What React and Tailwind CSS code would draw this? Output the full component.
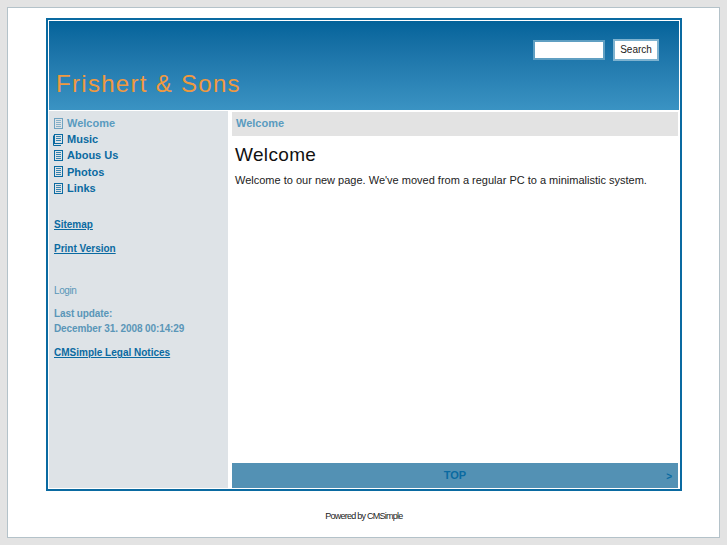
import React from "react";

// small document glyph used in the sidebar menu
function DocIcon({ stacked = false, color = "#0a6aa1" }) {
  return (
    <svg width="9" height="11" viewBox="0 0 9 11" fill="none" stroke={color} strokeWidth="1" className="shrink-0 overflow-visible">
      {stacked && <path d="M-0.5 1.5V11.5H7" />}
      <rect x="0.5" y="0.5" width="8" height={stacked ? 9 : 10} />
      <path d="M2 2.5H7M2 4.5H7M2 6.5H7" opacity="0.8" />
      {!stacked && <path d="M2 8.5H7" opacity="0.8" />}
    </svg>
  );
}

const menu = [
  { label: "Welcome", active: true },
  { label: "Music", stacked: true },
  { label: "Abous Us" },
  { label: "Photos" },
  { label: "Links" },
];

function App() {
  return (
    <div className="h-[545px] bg-[#e3e3e3] pt-[7px] pl-[7px] font-['Liberation_Sans',Arial,sans-serif]">
      <div className="flex h-[531px] w-[713px] flex-col border border-[#b4c2c9] bg-white pl-[38px] pt-[10px]">
        <div className="flex h-[473px] w-[636px] flex-col border-2 border-[#0a6aa1] p-px">
          <header className="flex h-[89px] flex-col justify-between bg-gradient-to-b from-[#03639a] to-[#3a93c3]">
            <div className="flex items-center justify-end gap-2 pt-[18px] pr-5">
              <input className="h-5 w-[72px] border-2 border-[#5f9fc2] bg-white" />
              <button className="h-[22px] w-[46px] border-2 border-[#7fb3d0] bg-white pb-[2px] text-[10px] text-[#222]">Search</button>
            </div>
            <div className="pb-[12px] pl-[7px] text-[24px] leading-[28px] tracking-[1.3px] text-[#f0993f]">Frishert &amp; Sons</div>
          </header>
          <div className="mt-px flex flex-1">
            <aside className="flex w-[179px] flex-col bg-[#dee3e7] pl-[5px] text-[10px] font-bold text-[#0a6aa1]">
              <nav className="flex flex-col pt-[4px] text-[11px]">
                {menu.map((m) => (
                  <div key={m.label} className="flex h-[16.25px] items-center gap-[4px]">
                    <DocIcon stacked={m.stacked} color={m.active ? "#6fa3c1" : "#0a6aa1"} />
                    <span className={m.active ? "text-[#5a9bbf]" : ""}>{m.label}</span>
                  </div>
                ))}
              </nav>
              <a className="mt-[21px] underline">Sitemap</a>
              <a className="mt-[9px] underline">Print Version</a>
              <div className="mt-[27px] font-normal tracking-[-0.4px] text-[#5a96b8]">Login</div>
              <div className="mt-2 leading-[15px] tracking-[-0.1px] text-[#5a96b8]">
                <div>Last update:</div>
                <div>December 31. 2008 00:14:29</div>
              </div>
              <a className="mt-[9px] underline">CMSimple Legal Notices</a>
            </aside>
            <main className="ml-1 flex w-[446px] flex-col">
              <div className="mt-px flex h-6 items-center bg-[#e3e3e3] pb-px pl-1 text-[11px] font-bold text-[#5a9bbf]">Welcome</div>
              <div className="flex-1 pl-[3px]">
                <h1 className="mt-[7px] text-[19px] leading-[24px] tracking-[0.35px] text-[#111]">Welcome</h1>
                <p className="mt-[6px] text-[11px] leading-[14px] text-[#222]">Welcome to our new page. We've moved from a regular PC to a minimalistic system.</p>
              </div>
              <div className="relative flex h-[25px] items-center justify-center bg-[#5391b4] text-[11px] font-bold text-[#0a6aa1]">
                TOP
                <span className="absolute right-[6px] top-[6px] text-[10px]">&gt;</span>
              </div>
            </main>
          </div>
        </div>
        <div className="mt-[19px] pr-[37px] text-center text-[9px] tracking-[-0.75px] text-[#222]">Powered by CMSimple</div>
      </div>
    </div>
  );
}

export default App;
